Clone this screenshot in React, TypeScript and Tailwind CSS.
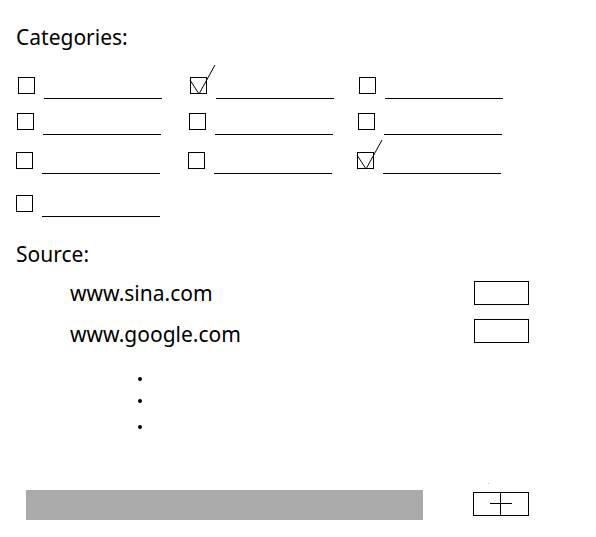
const ROWS: { offset: string; gap: string; items: boolean[] }[] = [
  { offset: "ml-[2px]", gap: "mt-[26px]", items: [false, true, false] },
  { offset: "ml-[1px]", gap: "mt-[14px]", items: [false, false, false] },
  { offset: "ml-0", gap: "mt-[17px]", items: [false, false, true] },
  { offset: "ml-0", gap: "mt-[21px]", items: [false] },
];

const SOURCES = [
  { name: "www.sina.com", gap: "mt-[11px]", boxOffset: "mt-[2px]" },
  { name: "www.google.com", gap: "mt-[13px]", boxOffset: "-mt-px" },
];

function CategoryItem({ checked }: { checked: boolean }) {
  return (
    <div className="flex items-start">
      <div className="relative h-[17px] w-[17px] border border-black">
        {checked && (
          <svg
            className="absolute -left-[2px] -top-[14px] overflow-visible"
            width="30"
            height="32"
            viewBox="0 0 30 32"
            fill="none"
          >
            <path d="M1 16 L10 30 L26 1" stroke="black" strokeWidth={1} />
          </svg>
        )}
      </div>
      <div className="ml-[9px] mt-[21px] h-px w-[118px] bg-black" />
    </div>
  );
}

export default function App() {
  return (
    <div
      className="min-h-[537px] w-[596px] bg-white pl-4 pt-[23px] text-[21px] leading-[28px] text-black"
      style={{ fontFamily: '"Noto Sans", "Open Sans", sans-serif' }}
    >
      <p>Categories:</p>

      {ROWS.map((row, i) => (
        <div key={i} className={`grid grid-cols-[172px_169px_auto] ${row.gap} ${row.offset}`}>
          {row.items.map((checked, j) => (
            <CategoryItem key={j} checked={checked} />
          ))}
        </div>
      ))}

      <p className="mt-[23px]">Source:</p>

      {SOURCES.map((s) => (
        <div key={s.name} className={`flex w-[513px] items-start ${s.gap}`}>
          <span className="pl-[54px]">{s.name}</span>
          <div className={`ml-auto h-[24px] w-[55px] border border-black ${s.boxOffset}`} />
        </div>
      ))}

      <div className="ml-[122px] mt-[29px] h-[4px] w-[4px] rounded-full bg-black" />
      <div className="ml-[122px] mt-[18px] h-[4px] w-[4px] rounded-full bg-black" />
      <div className="ml-[122px] mt-[22px] h-[4px] w-[4px] rounded-full bg-black" />

      <div className="mt-[61px] flex items-start">
        <div className="ml-[10px] h-[30px] w-[397px] bg-[#aaaaaa]" />
        <div className="relative ml-[50px] mt-[2px] h-[24px] w-[56px] border border-black">
          <span className="absolute -top-[10px] left-[14px] h-px w-px bg-[#bbbbbb]" />
          <svg width="54" height="22" viewBox="0 0 54 22" fill="none">
            <path d="M16 10.5 H38 M26.5 0 V22" stroke="black" strokeWidth={1} />
          </svg>
        </div>
      </div>
    </div>
  );
}
